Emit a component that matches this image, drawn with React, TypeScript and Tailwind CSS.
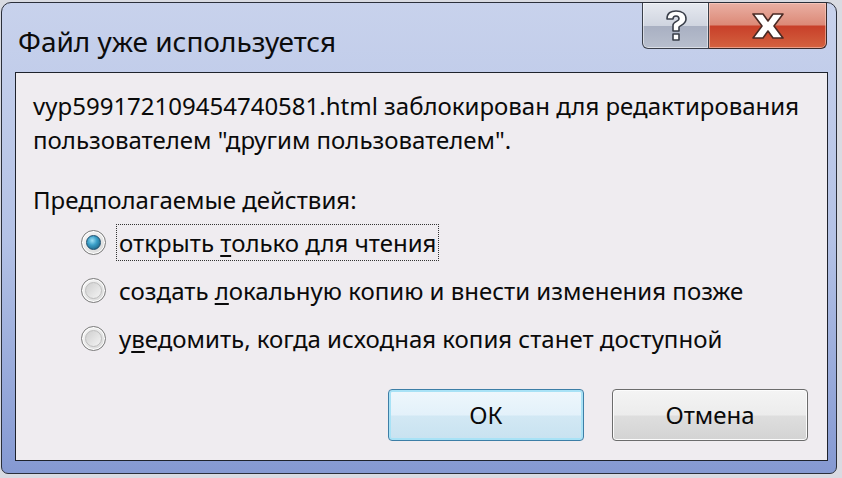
import React from "react";

const font = { fontFamily: '"Noto Sans", "Open Sans", sans-serif' };

function HelpGlyph() {
  return (
    <svg width="26" height="34" viewBox="0 0 26 34">
      <path
        d="M4 10 C4 4 8 2 13 2 C19 2 23 5 23 10 C23 15 18 16 16 18 L16 22 L10 22 L10 16 C10 13 16 12 16 10 C16 8 15 7 13 7 C11 7 10 8 10 10 Z M10 25 L16 25 L16 31 L10 31 Z"
        fill="#ffffff"
        stroke="#3a3f4a"
        strokeWidth="1.6"
        strokeLinejoin="round"
      />
    </svg>
  );
}

function CloseGlyph() {
  return (
    <svg width="36" height="28" viewBox="0 0 36 28">
      <path
        d="M3 2 L13 2 L18 9 L23 2 L33 2 L24 14 L33 26 L23 26 L18 19 L13 26 L3 26 L12 14 Z"
        fill="#ffffff"
        stroke="#4a2a24"
        strokeWidth="1.6"
        strokeLinejoin="round"
      />
    </svg>
  );
}

function Radio({ checked }: { checked?: boolean }) {
  return (
    <div className="w-[25px] h-[25px] rounded-full border border-[#7a7a7a] bg-gradient-to-br from-[#f8f8f8] to-[#d8d8d8] flex items-center justify-center shrink-0 shadow-[inset_0_0_0_1px_#ffffff]">
      {checked ? (
        <div className="w-[15px] h-[15px] rounded-full border border-[#1e4e6e] bg-[radial-gradient(circle_at_40%_35%,#9fe0f5_0%,#3a9fc8_40%,#15506f_100%)]" />
      ) : (
        <div className="w-[17px] h-[17px] rounded-full bg-gradient-to-br from-[#cfcfcf] to-[#f4f4f4] border border-[#bdbdbd]" />
      )}
    </div>
  );
}

export default function App() {
  return (
    <div className="w-[842px] h-[478px] bg-[#d9dbe2] overflow-hidden" style={font}>
      <div className="w-[836px] h-[472px] ml-[1px] mt-[2px] rounded-t-[10px] rounded-b-[7px] border border-[#2b2f3a] bg-gradient-to-b from-[#c8d2ec] via-[#b4c2e6] to-[#8599d2] flex flex-col">
        <div className="h-[69px] flex items-start shrink-0">
          <div className="pl-[16px] pt-[20px] text-[28px] leading-[36px] text-[#0c0c0c] flex-1">
            Файл уже используется
          </div>
          <div className="flex mr-[9px]">
            <div className="w-[67px] h-[46px] rounded-bl-[6px] border border-t-0 border-[#3a3f4a] bg-[linear-gradient(to_bottom,#e6e9f0_0%,#d0d5e0_50%,#a9b0c2_52%,#b8bfce_100%)] flex items-center justify-center shadow-[inset_0_0_0_1px_rgba(255,255,255,0.5)]">
              <HelpGlyph />
            </div>
            <div className="w-[118px] h-[46px] rounded-br-[6px] border border-t-0 border-l-0 border-[#3a2a2a] bg-[linear-gradient(to_bottom,#eab0a4_0%,#dc8a78_48%,#c8402a_52%,#d4623f_100%)] flex items-center justify-center shadow-[inset_0_0_0_1px_rgba(255,220,210,0.5)]">
              <CloseGlyph />
            </div>
          </div>
        </div>
        <div className="ml-[13px] mr-[8px] mb-[12px] flex-1 border border-[#1e222c] bg-[#efecf0] flex flex-col text-[24px] text-[#0a0a0a]">
          <div className="pl-[17px] pt-[16px] leading-[34px]">
            <div>vyp599172109454740581.html заблокирован для редактирования</div>
            <div>пользователем "другим пользователем".</div>
          </div>
          <div className="pl-[17px] mt-[26px] leading-[34px]">Предполагаемые действия:</div>
          <div className="pl-[65px] mt-[7px] flex flex-col gap-[11px]">
            <div className="flex items-center h-[37px]">
              <Radio checked />
              <div className="ml-[10px] h-[37px] px-[2px] border border-dotted border-[#333] flex items-center leading-[34px]">
                <span>
                  открыть <span className="underline underline-offset-[3px]">т</span>олько для чтения
                </span>
              </div>
            </div>
            <div className="flex items-center h-[37px]">
              <Radio />
              <div className="ml-[13px] leading-[34px]">
                создать <span className="underline underline-offset-[3px]">л</span>окальную копию и внести изменения позже
              </div>
            </div>
            <div className="flex items-center h-[37px]">
              <Radio />
              <div className="ml-[13px] leading-[34px]">
                у<span className="underline underline-offset-[3px]">в</span>едомить, когда исходная копия станет доступной
              </div>
            </div>
          </div>
          <div className="flex justify-end gap-[28px] pr-[19px] mt-[32px]">
            <div className="w-[196px] h-[52px] rounded-[4px] border border-[#3d7ea6] bg-[linear-gradient(to_bottom,#eef7fc_0%,#e3f1fa_50%,#d2e8f4_52%,#c8e2f0_100%)] shadow-[inset_0_0_0_2px_#a8e2f6] flex items-center justify-center">
              ОК
            </div>
            <div className="w-[196px] h-[52px] rounded-[4px] border border-[#6c6c6c] bg-[linear-gradient(to_bottom,#f4f4f4_0%,#ececec_50%,#dedede_52%,#d3d3d3_100%)] shadow-[inset_0_0_0_1px_#fcfcfc] flex items-center justify-center">
              Отмена
            </div>
          </div>
        </div>
      </div>
    </div>
  );
}
